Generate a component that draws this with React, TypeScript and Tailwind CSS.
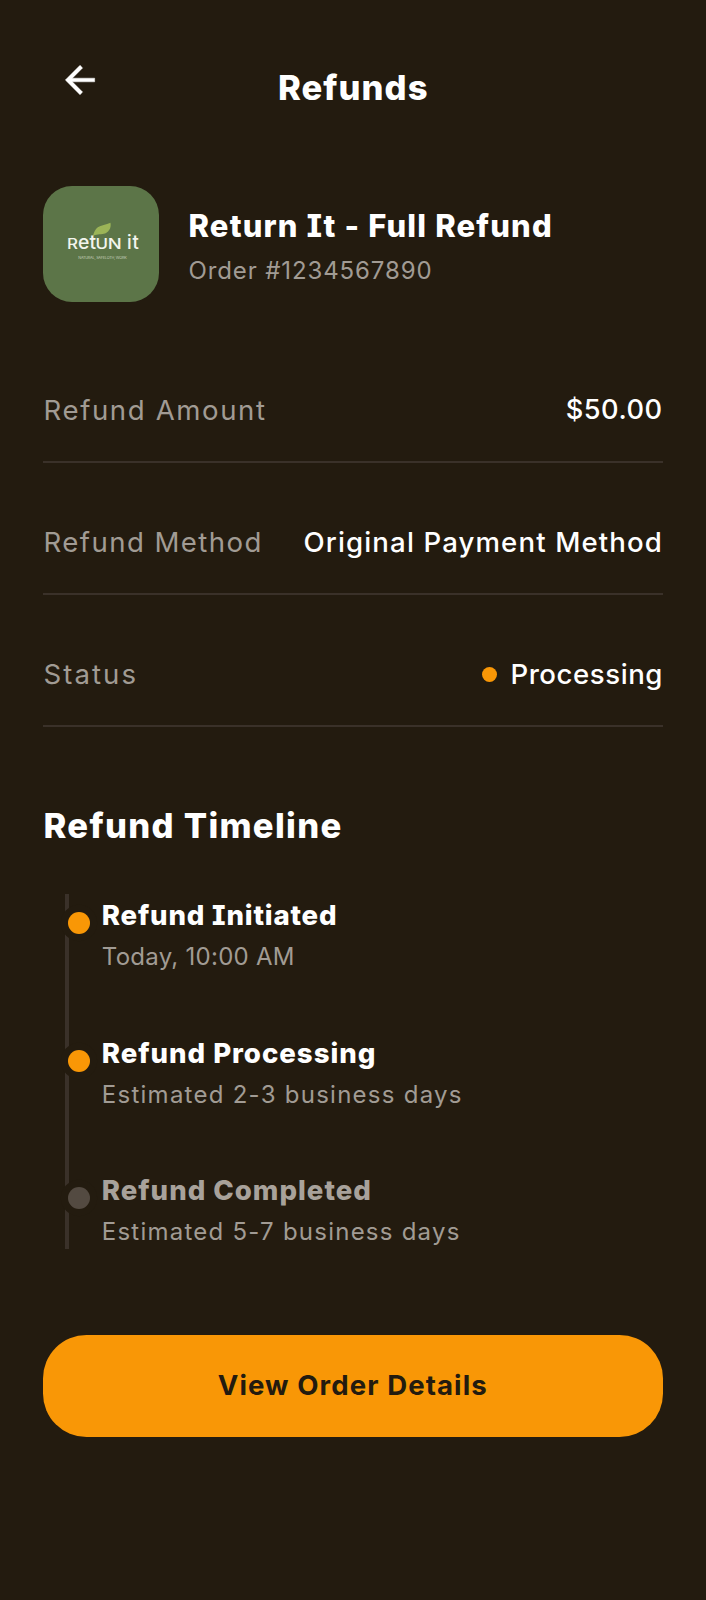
import type { ReactNode } from 'react';

function Row({ label, children }: { label: ReactNode; children: ReactNode }) {
  return (
    <div className="flex h-[132px] shrink-0 flex-col">
      <div className="flex h-[130px] items-end justify-between pb-[31px] text-[27.6px] leading-[40px] whitespace-nowrap">
        {label}
        {children}
      </div>
      <div className="h-[2px] shrink-0 bg-[#3a3129]" />
    </div>
  );
}

function Step({ dot, title, note }: { dot: string; title: ReactNode; note: ReactNode }) {
  return (
    <li className="flex h-[137.6px] gap-[11.5px] pt-[11px]">
      <span className={`mt-[7px] size-[22px] shrink-0 rounded-full ring-[7.2px] ring-[#231b0f] ${dot}`} />
      <div>
        <div className="h-[42px] text-[27.6px] leading-[21px] font-extrabold">{title}</div>
        <div className="text-[24px] leading-[20px] text-[#a19b94]">{note}</div>
      </div>
    </li>
  );
}

function Logo() {
  return (
    <svg viewBox="0 0 116 116" className="size-[116px] shrink-0 rounded-[29px] bg-[#5c7548]" fontFamily="Inter, sans-serif">
      <path d="M49.8 50.5 C51 46 52.5 43 54.8 41.3 C58 39 63 38.8 67.5 36.7 C68 40 67.5 42 66.3 43.7 C65 45.8 63.5 47 61 47.7 C57 48.8 52.5 47.5 49.8 50.5 Z" fill="#9bb457" />
      <g fill="#f3f5ee" fontWeight="500">
        <text x="24" y="63.3" fontSize="14" textLength="11" lengthAdjust="spacingAndGlyphs">R</text>
        <text x="35" y="63.3" fontSize="18.5" textLength="18" lengthAdjust="spacingAndGlyphs">et</text>
        <text x="52.5" y="63.3" fontSize="14" textLength="12.5" lengthAdjust="spacingAndGlyphs">U</text>
        <text x="64.8" y="63.3" fontSize="14" textLength="14" lengthAdjust="spacingAndGlyphs">N</text>
        <text x="84" y="63.3" fontSize="18.5" textLength="11.8">it</text>
      </g>
      <text x="35.3" y="72.5" fontSize="3.8" fill="#c3cdb8" textLength="48.5">NATURAL, SAFELOTH, WORK</text>
    </svg>
  );
}

export default function App() {
  return (
    <div className="flex h-[1600px] w-[706px] flex-col overflow-hidden bg-[#231b0f] pr-[43.5px] pl-[43px] font-['Inter',sans-serif] text-white [font-feature-settings:'cv08']">
      <header className="grid h-[186px] shrink-0 grid-cols-[80px_1fr_80px] pt-[57.7px]">
        <svg viewBox="0 0 24 24" className="ml-[14.5px] size-[44px]" fill="currentColor" stroke="currentColor" strokeWidth="0.25">
          <path d="m7.825 13 5.6 5.6L12 20l-8-8 8-8 1.425 1.4-5.6 5.6H20v2z" />
        </svg>
        <h1 className="pt-[9.8px] pl-[1px] text-center text-[34.6px] leading-[40px] font-extrabold tracking-[1.06px]">Refunds</h1>
      </header>

      <section className="flex h-[145px] shrink-0 gap-[29px]">
        <Logo />
        <div className="pt-[19.5px] pl-[0.5px]">
          <h2 className="text-[31px] leading-[40px] font-extrabold tracking-[1.17px] whitespace-nowrap">Return It - Full Refund</h2>
          <p className="mt-[5px] text-[24px] leading-[40px] tracking-[0.88px] text-[#a19b94]">Order #1234567890</p>
        </div>
      </section>

      <section className="shrink-0">
        <Row label={<span className="pl-[0.5px] tracking-[1.6px] text-[#a19b94]">Refund Amount</span>}>
          <span className="text-[27.2px] font-medium tracking-[0.5px]">$50.00</span>
        </Row>
        <Row label={<span className="pl-[0.5px] tracking-[1.43px] text-[#a19b94]">Refund Method</span>}>
          <span className="-mr-[0.5px] font-medium tracking-[1.12px]">Original Payment Method</span>
        </Row>
        <Row label={<span className="pl-[0.5px] tracking-[2.05px] text-[#a19b94]">Status</span>}>
          <span className="-mr-[0.5px] flex items-center gap-[13.5px] font-medium tracking-[0.56px]">
            <span className="size-[15px] rounded-full bg-[#f99706]" />
            Processing
          </span>
        </Row>
      </section>

      <h2 className="h-[167px] shrink-0 pt-[78px] pl-[0.5px] text-[34.6px] leading-[40px] font-extrabold tracking-[1.31px]">Refund Timeline</h2>

      <ol className="ml-[22px] h-[355px] shrink-0 bg-[linear-gradient(#3a3129,#3a3129)] bg-[length:4px_100%] bg-no-repeat pl-[3.3px]">
        <Step dot="bg-[#f99706]" title={<span className="tracking-[0.82px]">Refund Initiated</span>} note={<span className="tracking-[0.26px]">Today, 10:00 AM</span>} />
        <Step dot="bg-[#f99706]" title={<span className="tracking-[0.97px]">Refund Processing</span>} note={<span className="tracking-[1.26px]">Estimated 2-3 business days</span>} />
        <Step dot="bg-[#534a41]" title={<span className="tracking-[0.99px] text-[#a8a29b]">Refund Completed</span>} note={<span className="tracking-[1.24px]">Estimated 5-7 business days</span>} />
      </ol>

      <button className="mt-[86px] h-[101.5px] shrink-0 rounded-[43.5px] bg-[#f99706] text-[27.6px] font-bold tracking-[1.08px] text-[#231b0f]">
        View Order Details
      </button>
    </div>
  );
}
